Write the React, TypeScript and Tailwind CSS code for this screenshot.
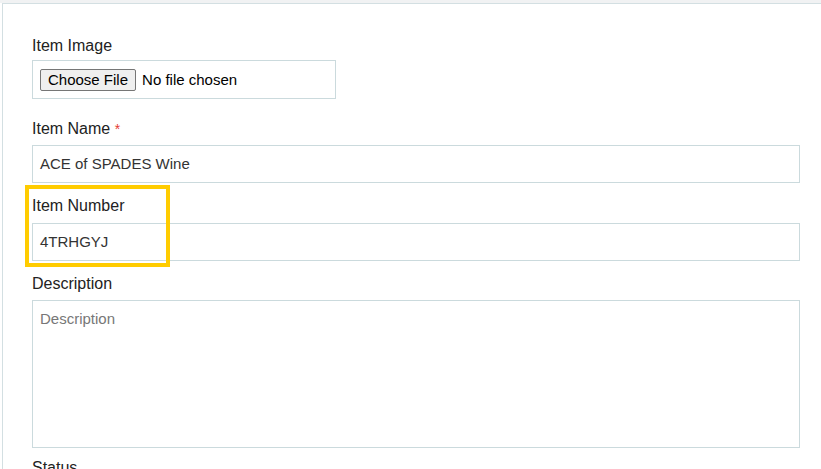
export default function App() {
  return (
    <div className="min-h-screen bg-white font-['Liberation_Sans',Arial,sans-serif] text-[#222]">
      <div className="h-[3px] bg-[#f1f2f3]" />
      <div className="ml-[2px] border-l border-t border-[#d3dfe2] pl-[29px] pt-[32px] pb-6">
        <div className="w-[768px]">
          {/* Item Image */}
          <div className="mb-[20px]">
            <label className="block text-[16px] leading-[20px] mb-[4px]">Item Image</label>
            <div className="flex h-[39px] w-[304px] items-center border border-[#cbdadd] pl-[7px] pt-[1px]">
              <span className="flex h-[22px] items-center rounded-[2px] border border-[#767676] bg-[#efefef] px-[7px] text-[15px] text-black">
                Choose File
              </span>
              <span className="ml-[6px] text-[15px] text-black">No file chosen</span>
            </div>
          </div>

          {/* Item Name */}
          <div className="mb-[13px]">
            <label className="block text-[16px] leading-[20px] mb-[6px]">
              Item Name <span className="text-[14px] text-[#e53935]">*</span>
            </label>
            <div className="flex h-[38px] items-center border border-[#cbdadd] pl-[7px] text-[15px] text-[#333]">
              ACE of SPADES Wine
            </div>
          </div>

          {/* Item Number */}
          <div className="relative mb-[13px]">
            <label className="block text-[16px] leading-[20px] mb-[7px]">Item Number</label>
            <div className="flex h-[38px] items-center border border-[#cbdadd] pl-[7px] text-[15px] text-[#333]">
              4TRHGYJ
            </div>
            <div className="pointer-events-none absolute left-[-7px] top-[-11px] h-[82px] w-[145px] border-4 border-[#ffcc00]" />
          </div>

          {/* Description */}
          <div className="mb-[10px]">
            <label className="block text-[16px] leading-[20px] mb-[6px]">Description</label>
            <div className="h-[148px] border border-[#cbdadd] pl-[7px] pt-[9px] text-[15px] leading-[18px] text-[#777]">
              Description
            </div>
          </div>

          {/* Status */}
          <div>
            <label className="block text-[16px] leading-[20px] mb-[8px]">Status</label>
            <div className="h-[38px] border border-[#cbdadd]" />
          </div>
        </div>
      </div>
    </div>
  );
}
